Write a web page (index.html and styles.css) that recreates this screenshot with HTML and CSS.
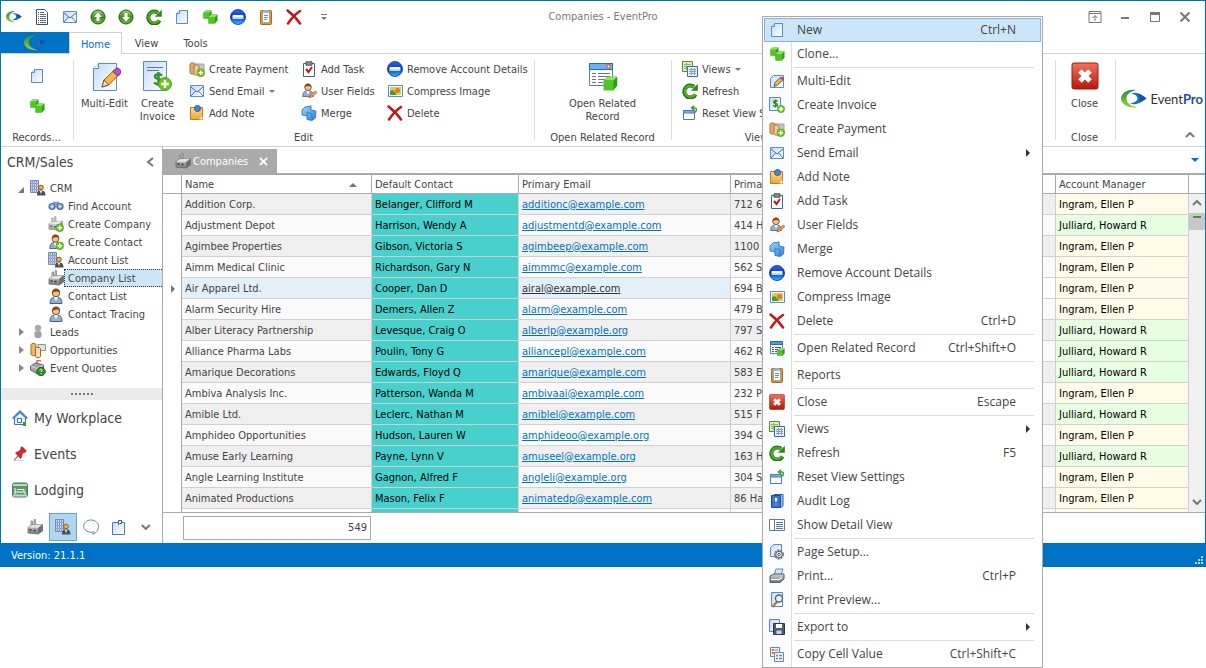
FILE: index.html
```html
<!DOCTYPE html>
<html lang="en">
<head>
  <meta charset="UTF-8" />
  <meta name="viewport" content="width=device-width, initial-scale=1.0"/>
  <title>Companies - EventPro</title>
  <link rel="stylesheet" href="styles.css">
</head>
<body>

  <!-- Icon sprite -->
  <svg class="sprite" aria-hidden="true">
    <defs>
      <linearGradient id="gPaper" x1="0" y1="0" x2="1" y2="1"><stop offset="0" stop-color="#c4dbf5"/><stop offset="1" stop-color="#fff"/></linearGradient>
      <linearGradient id="gGreen" x1="0" y1="0" x2="0" y2="1"><stop offset="0" stop-color="#a5d88a"/><stop offset=".5" stop-color="#3f8a1f"/><stop offset="1" stop-color="#6cc03c"/></linearGradient>
      <linearGradient id="gBlue" x1="0" y1="0" x2="0" y2="1"><stop offset="0" stop-color="#2f6df0"/><stop offset=".5" stop-color="#0b2fd0"/><stop offset="1" stop-color="#35c3ff"/></linearGradient>
      <linearGradient id="gRed" x1="0" y1="0" x2="0" y2="1"><stop offset="0" stop-color="#f0735c"/><stop offset="1" stop-color="#b81708"/></linearGradient>
      <linearGradient id="gGold" x1="0" y1="0" x2="0" y2="1"><stop offset="0" stop-color="#ffd98a"/><stop offset="1" stop-color="#f2a73a"/></linearGradient>
      <linearGradient id="gGrey" x1="0" y1="0" x2="0" y2="1"><stop offset="0" stop-color="#d4d4d4"/><stop offset="1" stop-color="#777"/></linearGradient>
      <linearGradient id="gSwirl" x1="0" y1="0" x2="0" y2="1"><stop offset="0" stop-color="#1f8f46"/><stop offset="1" stop-color="#a5cf3a"/></linearGradient>
      <linearGradient id="gSky" x1="0" y1="0" x2="1" y2="1"><stop offset="0" stop-color="#9ad4fa"/><stop offset="1" stop-color="#2e86d8"/></linearGradient>
    </defs>

    <symbol id="swirl" viewBox="0 0 26 20"><path d="M15 1C7-.5 0 4 0 9.500 0 15 7 19.500 17 18.500 10 17.500 5.500 14 5.500 9.500 5.500 5.500 9 2.500 15 1z" fill="url(#gSwirl)"/><path d="M10 4.500C16 2.500 21 5.500 25.500 9.500 21 13.500 15 16.500 9 14.500c4-.5 7.500-2.500 7.500-5s-2.500-4.500-6.500-5z" fill="#1173bd"/><path d="M17 5c3 .8 6 2.500 8.500 4.500L19 12c.5-2.500 0-5-2-7z" fill="#1b4f9c"/></symbol>
    <symbol id="plus" viewBox="0 0 8 8"><circle cx="4" cy="4" r="3.700" fill="#6cc522" stroke="#4b9a12" stroke-width=".5"/><path d="M4 1.800v4.400M1.800 4h4.400" stroke="#fff" stroke-width="1.400"/></symbol>
    <symbol id="cube" viewBox="0 0 10 10"><path d="M0.500 3 3 .5h6.500v6L7 9.500H.5z" fill="#2f9a14"/><path d="M.5 3 3 .5h6.500L7 3z" fill="#8be55c"/><path d="M.5 3H7v6.500H.5z" fill="#4fc528"/></symbol>

    <symbol id="doclist" viewBox="0 0 16 16"><path d="M2.500.5h8l3 3v12h-11z" fill="#fff" stroke="#2d5878"/><path d="M6 3.500h4M6 5.500h6M6 7.500h6M6 9.500h6M6 11.500h6M6 13.500h6" stroke="#4c6c94"/><path d="M4 3.500h1M4 5.500h1M4 7.500h1M4 9.500h1M4 11.500h1M4 13.500h1" stroke="#d33"/></symbol>
    <symbol id="mail" viewBox="0 0 16 16"><path d="M1.500 2.500h13v11h-13z" fill="url(#gPaper)" stroke="#5d8fd0"/><path d="M2 4l6 5 6-5M2 13l4.500-5M14 13 9.500 8" fill="none" stroke="#3b6fb8"/></symbol>
    <symbol id="up" viewBox="0 0 16 16"><circle cx="8" cy="8" r="7" fill="url(#gGreen)" stroke="#1f5a0c"/><path d="M8 3.500 12 8H9.500v4h-3V8H4z" fill="#fff"/></symbol>
    <symbol id="down" viewBox="0 0 16 16"><circle cx="8" cy="8" r="7" fill="url(#gGreen)" stroke="#1f5a0c"/><path d="M8 12.500 4 8h2.500V4h3v4H12z" fill="#fff"/></symbol>
    <symbol id="refresh" viewBox="0 0 16 16"><path d="M13.500 11.500A6 6 0 1 1 12 3.800" fill="none" stroke="#1f6b0c" stroke-width="4"/><path d="M13.200 11.300A5.700 5.700 0 1 1 12 4" fill="none" stroke="#4cab2e" stroke-width="2.400"/><path d="M15.800.8v7H8.800z" fill="#2a8a16"/></symbol>
    <symbol id="new" viewBox="0 0 16 16"><path d="M5.500 1.500h8v13h-11v-10z" fill="url(#gPaper)" stroke="#5b8ac6"/><path d="M5.500 1.500v3h-3" fill="#eef6ff" stroke="#5b8ac6"/></symbol>
    <symbol id="clone" viewBox="0 0 16 16"><use href="#cube" x="1" y="1" width="9" height="9"/><use href="#cube" x="6" y="5" width="10" height="10"/></symbol>
    <symbol id="remove" viewBox="0 0 16 16"><circle cx="8" cy="8" r="7.500" fill="url(#gBlue)" stroke="#0b2aa8" stroke-width=".8"/><rect x="2.500" y="6" width="11" height="4" rx="1" fill="#fff"/><path d="M3 8h10v2H3z" fill="#b9dcff"/></symbol>
    <symbol id="report" viewBox="0 0 16 16"><rect x="2.500" y="1.500" width="11" height="14" rx="1" fill="#dc9a2a" stroke="#a8690f"/><path d="M4.500 3.500h7v10h-7z" fill="#fff" stroke="#8fa6c4"/><rect x="5" y="1" width="6" height="3" rx="1" fill="#9db0c8"/><path d="M6 6.500h4M6 8.500h4M6 10.500h3" stroke="#5b8fd2"/></symbol>
    <symbol id="delete" viewBox="0 0 16 16"><path d="M1.500 1.500C6 5 11 10 14 14.500M14 2C9.500 5 5 10 2 14.500" fill="none" stroke="#c4161a" stroke-width="2.500" stroke-linecap="round"/></symbol>
    <symbol id="multiedit" viewBox="0 0 32 32"><path d="M9.500 2.500h18v27h-23v-22z" fill="url(#gPaper)" stroke="#5b8ac6"/><path d="M9.500 2.500v5h-5" fill="#fff" stroke="#5b8ac6"/><path d="M13 26l2-7L26 8.500l4.500 4.500L19.500 24z" fill="#f6b93c" stroke="#8a5a18"/><path d="M13 26l2-7 4.500 5z" fill="#f4e2c0" stroke="#444" stroke-width=".8"/><path d="M24 10.500l4.500 4.500 3-2.500c1.500-3-2-6.500-4.500-5z" fill="#b74fd0" stroke="#6f2c80"/></symbol>
    <symbol id="medit16" viewBox="0 0 16 16"><path d="M4.500 2.500h10v12h-13v-9z" fill="url(#gPaper)" stroke="#5b8ac6"/><path d="M5 13.500l1-4 6-5.500 2.500 2.500L8.500 12z" fill="#f6b93c" stroke="#3f3f3f" stroke-width=".8"/><path d="M11 5l2.500 2.500 1.500-2-1.800-2z" fill="#9a4fc0"/></symbol>
    <symbol id="invoice" viewBox="0 0 32 32"><path d="M1.500.5h23v29h-23z" fill="url(#gPaper)" stroke="#5b8ac6"/><path d="M5 6.500h16M5 9.500h12" stroke="#5b7898"/><path d="M20 14.500c-2-2-7-1.500-7 1.300s7 1.700 7 4.700-5.500 3.500-8 1.200M16.500 11v14" fill="none" stroke="#3a8f2c" stroke-width="2.500"/><use href="#plus" x="16" y="16" width="14" height="14"/></symbol>
    <symbol id="invoice16" viewBox="0 0 16 16"><path d="M.5.5h11v13H.5z" fill="url(#gPaper)" stroke="#5b8ac6"/><path d="M8.500 4.500c-1-1.300-4-1-4 .6s4 1 4 2.700-3 2-4.500.7M6.500 2.500v8" fill="none" stroke="#2e8b22" stroke-width="1.500"/><use href="#plus" x="8" y="8" width="8" height="8"/></symbol>
    <symbol id="payment" viewBox="0 0 16 16"><path d="M6 3h9v9H6z" fill="#c9c6bd" stroke="#a8a598"/><path d="M1 3c0-1.500 5-1.500 5 0v9c0 1.500-5 1.500-5 0z" fill="#dba872" stroke="#b07a42"/><path d="M5 5c0-1.500 5-1.500 5 0v8c0 1.500-5 1.500-5 0z" fill="#efcb98" stroke="#b07a42"/><use href="#plus" x="7.500" y="7.500" width="8.500" height="8.500"/></symbol>
    <symbol id="note" viewBox="0 0 16 16"><path d="M1.500 2.500h12v12h-12z" fill="url(#gGold)" stroke="#b97a20"/><path d="M13.500 11v3.500H10z" fill="#fff0c8"/><circle cx="8.500" cy="3.500" r="3" fill="#4b86cc" stroke="#2b5a98"/></symbol>
    <symbol id="task" viewBox="0 0 16 16"><path d="M2.500 2.500h11v13h-11z" fill="#fff" stroke="#34679e"/><path d="M5 .8h6v3.400H5z" fill="#8a8f96" stroke="#555"/><path d="M5 8l2.500 3 3.500-5" fill="none" stroke="#c4161a" stroke-width="2"/></symbol>
    <symbol id="person" viewBox="0 0 16 16"><path d="M2 15.500c0-5 2-6.500 6-6.500s6 1.500 6 6.500z" fill="#8fb0d8" stroke="#4d5f78"/><path d="M6 9h4l-2 4z" fill="#fff"/><circle cx="8" cy="5" r="3.700" fill="#f2c08a" stroke="#8a4d26"/><path d="M4 5c0-6 8-6 8 0-2-2-5-2-8 0z" fill="#8a4517"/></symbol>
    <symbol id="userfields" viewBox="0 0 16 16"><use href="#person" x="0" y="0" width="14" height="14"/><path d="M8 15l1-3 5.500-4 1.300 1.700L10.500 14z" fill="#f0a050" stroke="#b04a20" stroke-width=".7"/></symbol>
    <symbol id="merge" viewBox="0 0 16 16"><path d="M1 5l3-3 6-1v4l5 1-.5 7-3.500 2.500-5-1V11l-5-1z" fill="url(#gSky)" stroke="#2669b4" stroke-width=".8"/><path d="M6 11V7.500l5 1.200v6" fill="none" stroke="#2669b4" stroke-width=".7"/></symbol>
    <symbol id="compress" viewBox="0 0 16 16"><path d="M1.500 2.500h14v11h-14z" fill="#fff" stroke="#5b8ac6"/><path d="M3 4h11v8H3z" fill="#e0c95a"/><path d="M3 12V8l3-1 4 5z" fill="#4b9a2c"/><circle cx="10.500" cy="7.500" r="2.600" fill="#d9822a"/></symbol>
    <symbol id="open" viewBox="0 0 32 32"><path d="M2.500 2.500h23v22h-23z" fill="#fff" stroke="#4a86c6"/><path d="M2.500 2.500h23v6h-23z" fill="#6fb0f0" stroke="#2a6ab0"/><rect x="20" y="4" width="3" height="3" fill="#fff" stroke="#e04a2a"/><path d="M5 12.500h4M5 15.500h4M5 18.500h4M5 21.500h4M11 12.500h12M11 15.500h12M11 18.500h8M11 21.500h5" stroke="#777"/><use href="#cube" x="16" y="15" width="15" height="15"/></symbol>
    <symbol id="open16" viewBox="0 0 16 16"><path d="M1.500 1.500h12v12h-12z" fill="#fff" stroke="#4a86c6"/><path d="M1.500 1.500h12v3h-12z" fill="#4f9ae6" stroke="#2a6ab0"/><path d="M3 7.500h2M3 9.500h2M3 11.500h2M6 7.500h6M6 9.500h3M6 11.500h2" stroke="#555"/><use href="#cube" x="8" y="8" width="8" height="8"/></symbol>
    <symbol id="close" viewBox="0 0 28 28"><rect x="1" y="1" width="26" height="26" rx="2" fill="url(#gRed)" stroke="#9a1c10"/><path d="M9 9l10 10M19 9 9 19" stroke="#fff" stroke-width="5"/></symbol>
    <symbol id="views" viewBox="0 0 16 16"><path d="M.5.5h10v10H.5z" fill="#dcefc4" stroke="#5c8a34"/><path d="M2 3.500h7M2 5.500h4M2 7.500h3M4.500 2v7" stroke="#8db464"/><path d="M5.500 5.500h10v10h-10z" fill="#e8f1ff" stroke="#3d68ac"/><path d="M7 8.500h7M7 10.500h7M7 12.500h7M9.500 7v7M12.500 7v7" stroke="#7ba0dc"/></symbol>
    <symbol id="reset" viewBox="0 0 16 16"><path d="M1.500 5.500h11v9h-11z" fill="#fff" stroke="#4a7cba"/><path d="M1.500 5.500h11V8h-11z" fill="#78aaf0" stroke="#4a7cba"/><path d="M10 3h3c2 0 2 4-.5 4.500M12 .8 9.500 3 12 5" fill="none" stroke="#3f9a3a" stroke-width="1.500"/></symbol>
    <symbol id="audit" viewBox="0 0 16 16"><path d="M5 1.500h9v11l-2 2z" fill="#9fc0ea" stroke="#2a5db0"/><path d="M2.500 2.500h9v12h-9z" fill="#3a74cc" stroke="#1d4a94"/><path d="M6 5.500h2l-1 3zM6.500 11h1" fill="#fff" stroke="#fff"/></symbol>
    <symbol id="detail" viewBox="0 0 16 16"><path d="M.5 2.500h15v11H.5z" fill="#fff" stroke="#777"/><path d="M5.500 2v12" stroke="#777"/><path d="M7 5.500h7M7 7.500h7M7 9.500h7M7 11.500h7" stroke="#3f82c4"/></symbol>
    <symbol id="setup" viewBox="0 0 16 16"><path d="M4.500.5h8v12h-11v-9z" fill="url(#gPaper)" stroke="#5b8ac6"/><circle cx="10" cy="10.500" r="4.300" fill="none" stroke="#6c7482" stroke-width="1.500" stroke-dasharray="2 1"/><circle cx="10" cy="10.500" r="3.300" fill="#e8e8e8" stroke="#545c6a"/><circle cx="10" cy="10.500" r="1.200" fill="#fff" stroke="#545c6a"/></symbol>
    <symbol id="print" viewBox="0 0 16 16"><path d="M5 7l2-6h7l-2 6z" fill="#cfe4fb" stroke="#5b8ac6"/><path d="M1 8l4-2h10v5l-4 3.500H1z" fill="url(#gGrey)" stroke="#5c5c5c"/><path d="M2 11.500h8l3-2" fill="none" stroke="#fff"/></symbol>
    <symbol id="preview" viewBox="0 0 16 16"><path d="M2.500.5h11v14h-11z" fill="url(#gPaper)" stroke="#5b8ac6"/><path d="M8 9.500 3.500 15" stroke="#b87830" stroke-width="2.400"/><circle cx="10" cy="6.500" r="3.500" fill="#e3f2ff" stroke="#4c5f78" stroke-width="1.300"/></symbol>
    <symbol id="export" viewBox="0 0 16 16"><path d="M.5.5h10v12H.5z" fill="url(#gPaper)" stroke="#6b7cb8"/><path d="M4.500 4.500h11v11h-11z" fill="#4c5b78" stroke="#2b3650"/><path d="M7 5h6v4H7z" fill="#fff"/><path d="M7.500 11.500h5V15h-5z" fill="#c9d3e4"/></symbol>
    <symbol id="copy" viewBox="0 0 16 16"><path d="M1.500 1.500h9v9h-9z" fill="#eef4fb" stroke="#6a86a8"/><path d="M3 3.500h2v1H3zM3 6.500h2v1H3z" fill="#f07a20" stroke="#f07a20"/><path d="M6 4h3M6 7h3" stroke="#6a86a8"/><path d="M5.500 6.500h9v9h-9z" fill="#eef4fb" stroke="#6a86a8"/><path d="M7 9.500h2" stroke="#f07a20" stroke-width="2"/><path d="M10 9.500h3M7 12.500h2M10 12.500h3" stroke="#6a86a8" stroke-width="1.500"/></symbol>
    <symbol id="factory" viewBox="0 0 16 16"><path d="M4 7V2h1.500v4M7 6V.5h1.500V6" fill="#bbb" stroke="#888" stroke-width=".8"/><path d="M1 8.500 5 6l10.500-.5V12L11 15 1 14z" fill="url(#gGrey)" stroke="#666" stroke-width=".8"/><path d="M1 8.500 5 6l10.500-.5L11 9z" fill="#e2e2e2"/><path d="M11 9l4.500-3.500V12L11 15z" fill="#707070"/><path d="M2.500 11h2M6.500 11.500h2" stroke="#333" stroke-width="1.500"/></symbol>
    <symbol id="factoryadd" viewBox="0 0 16 16"><g opacity=".75"><use href="#factory" width="15" height="15"/></g><use href="#plus" x="7.500" y="7.500" width="8.500" height="8.500"/></symbol>
    <symbol id="contactadd" viewBox="0 0 16 16"><use href="#person" width="15" height="15"/><use href="#plus" x="7.500" y="7.500" width="8.500" height="8.500"/></symbol>
    <symbol id="crm" viewBox="0 0 16 16"><path d="M.5.500h8v12h-8z" fill="#c0d0ec" stroke="#7a8ab0"/><path d="M2.500 1v11M4.500 1v11M6.500 1v11M1 3.500h7M1 6.500h7M1 9.500h7" stroke="#8fa2cc"/><path d="M7 15.500c0-4 1-5 4-5s4.500 1 4.500 5z" fill="#4c5056"/><path d="M10 11h2l-1 3z" fill="#fff"/><circle cx="11" cy="7.500" r="2.300" fill="#f1b44c" stroke="#8a5a18"/></symbol>
    <symbol id="binoc" viewBox="0 0 16 16"><circle cx="4" cy="8.500" r="3" fill="#7fa6d6" stroke="#456a9e" stroke-width="1.200"/><circle cx="12" cy="8.500" r="3" fill="#7fa6d6" stroke="#456a9e" stroke-width="1.200"/><path d="M5 4.500h2v4h2v-4h2" fill="none" stroke="#6488bc" stroke-width="1.600"/><circle cx="4" cy="8.500" r="1.200" fill="#dbe8f8"/><circle cx="12" cy="8.500" r="1.200" fill="#dbe8f8"/></symbol>
    <symbol id="lead" viewBox="0 0 16 16"><circle cx="8" cy="4" r="3.200" fill="#aaa"/><path d="M4.500 8c2-1.500 5-1.500 7 0v4c-.5 3-6.500 3-7 0z" fill="#a2a2a2"/></symbol>
    <symbol id="opp" viewBox="0 0 16 16"><path d="M8 2.500h7.500v6H8z" fill="#dfe4ea" stroke="#8a929c"/><path d="M1 2.500c0-1.500 5-1.500 5 0v10c0 1.500-5 1.500-5 0z" fill="#eeb468" stroke="#a86826"/><path d="M5.500 6.500c0-1.500 5-1.500 5 0v8c0 1.500-5 1.500-5 0z" fill="#fbdca6" stroke="#a86826"/></symbol>
    <symbol id="quote" viewBox="0 0 16 16"><path d="M.5 6l5-3 8 2v5l-6 4-7-4z" fill="#a8a8a8" stroke="#666"/><path d="M1 6l6 2.500L13 5" fill="none" stroke="#ddd"/><path d="M7 0v4M7 .8h4" stroke="#c33"/><circle cx="11" cy="11.500" r="4.200" fill="#2f8f24" stroke="#1c6414"/><path d="M9.800 10.500c0-2 2.600-1.500 2.300 0L11 12M11 13.200v1" fill="none" stroke="#fff"/></symbol>
    <symbol id="house" viewBox="0 0 16 16"><path d="M2.500 7.500v7h11v-7L8 2.500z" fill="#e4effc" stroke="#4672b4"/><path d="M.8 8.500 8 1.500l7.200 7" fill="none" stroke="#4d80c8" stroke-width="2"/><path d="M5.500 8.500h4v4h-4z" fill="#fff" stroke="#3f6cb0"/><path d="M11 12h3v4h-3z" fill="#3f9a2a"/></symbol>
    <symbol id="pin" viewBox="0 0 16 16"><path d="M2 14.500 6 10" stroke="#8a8a8a" stroke-width="1.300"/><path d="M3 14.500h9" stroke="#ddd"/><path d="M3.500 7c1.500-1.500 3-1.500 3.500-1.500L9 3c-.5-1.500.5-2.500 1.500-2l3.500 3.500c.5 1-.5 2-2 1.800L10 8.500c0 1 0 2.500-1.500 4z" fill="#d8262a" stroke="#8e1014" stroke-width=".6"/></symbol>
    <symbol id="lodging" viewBox="0 0 16 16"><rect x=".5" y="1" width="15" height="14" rx="2" fill="#5a9a6a" stroke="#4c7a5a"/><path d="M1 3h14M1 13.500h14" stroke="#bcd8c0" stroke-width="2"/><path d="M3 6v6M3 10h10v2M5 7.500h7v2" fill="none" stroke="#fff"/></symbol>
    <symbol id="bubble" viewBox="0 0 16 16"><path d="M8 1C4 1 .6 3.800.6 7.200c0 3.300 3.400 6 7.400 6 1 0 2-.2 3-.5 0 1-.5 1.800-1.500 2.500 3-.4 6-3.800 6-8C15.500 3.800 12 1 8 1z" fill="#fcfdff" stroke="#6d86a6"/></symbol>
    <symbol id="workplan" viewBox="0 0 16 16"><path d="M2.500 3.500h12v12h-12z" fill="url(#gPaper)" stroke="#4a7cba"/><path d="M8.500 6V1.500h3v3h-2" fill="#fff" stroke="#2a5a98"/></symbol>
    <symbol id="chevron" viewBox="0 0 10 6"><path d="M1 5l4-4 4 4" fill="none" stroke="#777" stroke-width="2"/></symbol>
  </svg>

  <div class="window">
    <header class="titlebar">
      <div class="quick">
        <button aria-label="EventPro"><svg><use href="#swirl"/></svg></button>
        <button aria-label="List"><svg><use href="#doclist"/></svg></button>
        <button aria-label="Mail"><svg><use href="#mail"/></svg></button>
        <button aria-label="Previous"><svg><use href="#up"/></svg></button>
        <button aria-label="Next"><svg><use href="#down"/></svg></button>
        <button aria-label="Refresh"><svg><use href="#refresh"/></svg></button>
        <button aria-label="New"><svg><use href="#new"/></svg></button>
        <button aria-label="Clone"><svg><use href="#clone"/></svg></button>
        <button aria-label="Remove"><svg><use href="#remove"/></svg></button>
        <button aria-label="Reports"><svg><use href="#report"/></svg></button>
        <button aria-label="Delete"><svg><use href="#delete"/></svg></button>
        <button class="more" aria-label="Customize"><svg viewBox="0 0 16 16"><path d="M5 5.500h6" stroke="#777"/><path d="M5 8h6l-3 3z" fill="#777"/></svg></button>
      </div>
      <h1>Companies - EventPro</h1>
      <div class="winctl">
        <button aria-label="Ribbon options"><svg viewBox="0 0 14 14"><path d="M1 1.500h12v11H1zM1 3.500h12M7 11V6M4.500 8 7 5.500 9.500 8" fill="none" stroke="#777"/></svg></button>
        <button aria-label="Minimize"><svg viewBox="0 0 14 14"><path d="M3 8h8" stroke="#777" stroke-width="2"/></svg></button>
        <button aria-label="Maximize"><svg viewBox="0 0 14 14"><path d="M2.500 3v8.500h9V3" fill="none" stroke="#777"/><path d="M2 3.500h10" stroke="#777" stroke-width="3"/></svg></button>
        <button aria-label="Close window"><svg viewBox="0 0 14 14"><path d="M2.500 2.500l9 9M11.500 2.500l-9 9" stroke="#777" stroke-width="2"/></svg></button>
      </div>
    </header>

    <nav class="tabs">
      <button class="file" aria-label="Application menu"><svg><use href="#swirl"/></svg></button>
      <button class="tab active">Home</button>
      <button class="tab">View</button>
      <button class="tab">Tools</button>
    </nav>

    <div class="ribbon">
      <section class="group records">
        <div class="stack">
          <button aria-label="New record"><svg><use href="#new"/></svg></button>
          <button aria-label="Clone record"><svg><use href="#clone"/></svg></button>
        </div>
        <h2>Records...</h2>
      </section>
      <section class="group edit">
        <div class="tools">
          <button class="big"><svg><use href="#multiedit"/></svg>Multi-Edit</button>
          <button class="big"><svg><use href="#invoice"/></svg>Create Invoice</button>
          <div class="small-grid">
            <button class="small"><svg><use href="#payment"/></svg>Create Payment</button>
            <button class="small"><svg><use href="#task"/></svg>Add Task</button>
            <button class="small"><svg><use href="#remove"/></svg>Remove Account Details</button>
            <button class="small"><svg><use href="#mail"/></svg>Send Email<i class="caret"></i></button>
            <button class="small"><svg><use href="#userfields"/></svg>User Fields</button>
            <button class="small"><svg><use href="#compress"/></svg>Compress Image</button>
            <button class="small"><svg><use href="#note"/></svg>Add Note</button>
            <button class="small"><svg><use href="#merge"/></svg>Merge</button>
            <button class="small"><svg><use href="#delete"/></svg>Delete</button>
          </div>
        </div>
        <h2>Edit</h2>
      </section>
      <section class="group related">
        <div class="tools">
          <button class="big"><svg><use href="#open"/></svg>Open Related Record</button>
        </div>
        <h2>Open Related Record</h2>
      </section>
      <section class="group view">
        <div class="tools">
          <div class="small-grid">
            <button class="small"><svg><use href="#views"/></svg>Views<i class="caret"></i></button>
            <button class="small"><svg><use href="#refresh"/></svg>Refresh</button>
            <button class="small"><svg><use href="#reset"/></svg>Reset View S</button>
          </div>
        </div>
        <h2>View</h2>
      </section>
      <section class="group closing">
        <div class="tools">
          <button class="big"><svg><use href="#close"/></svg>Close</button>
        </div>
        <h2>Close</h2>
      </section>
      <div class="brand">
        <div class="logo"><svg><use href="#swirl"/></svg><span>Event<b>Pro</b></span></div>
        <button aria-label="Collapse ribbon"><svg><use href="#chevron"/></svg></button>
      </div>
    </div>

    <div class="main">
      <aside class="sidebar">
        <div class="side-head">CRM/Sales <button aria-label="Collapse"><svg viewBox="0 0 8 10"><path d="M7 1 2 5l5 4" fill="none" stroke="#777" stroke-width="2"/></svg></button></div>
        <ul class="tree">
          <li><a href="#"><i class="exp open"></i><svg><use href="#crm"/></svg><span>CRM</span></a></li>
          <li class="sub"><a href="#"><svg><use href="#binoc"/></svg><span>Find Account</span></a></li>
          <li class="sub"><a href="#"><svg><use href="#factoryadd"/></svg><span>Create Company</span></a></li>
          <li class="sub"><a href="#"><svg><use href="#contactadd"/></svg><span>Create Contact</span></a></li>
          <li class="sub"><a href="#"><svg><use href="#crm"/></svg><span>Account List</span></a></li>
          <li class="sub selected"><a href="#"><svg><use href="#factory"/></svg><span>Company List</span></a></li>
          <li class="sub"><a href="#"><svg><use href="#person"/></svg><span>Contact List</span></a></li>
          <li class="sub"><a href="#"><svg><use href="#person"/></svg><span>Contact Tracing</span></a></li>
          <li><a href="#"><i class="exp"></i><svg><use href="#lead"/></svg><span>Leads</span></a></li>
          <li><a href="#"><i class="exp"></i><svg><use href="#opp"/></svg><span>Opportunities</span></a></li>
          <li><a href="#"><i class="exp"></i><svg><use href="#quote"/></svg><span>Event Quotes</span></a></li>
        </ul>
        <div class="splitter"><svg viewBox="0 0 24 2"><path d="M1 1h22" stroke="#777" stroke-width="2" stroke-dasharray="2 2"/></svg></div>
        <ul class="areas">
          <li><a href="#"><svg><use href="#house"/></svg>My Workplace</a></li>
          <li><a href="#"><svg><use href="#pin"/></svg>Events</a></li>
          <li><a href="#"><svg><use href="#lodging"/></svg>Lodging</a></li>
        </ul>
        <div class="side-icons">
          <button aria-label="Companies"><svg><use href="#factory"/></svg></button>
          <button class="on" aria-label="CRM"><svg><use href="#crm"/></svg></button>
          <button aria-label="Messages"><svg><use href="#bubble"/></svg></button>
          <button aria-label="Notes"><svg><use href="#workplan"/></svg></button>
          <button class="flip" aria-label="More"><svg><use href="#chevron"/></svg></button>
        </div>
      </aside>

      <div class="content">
        <div class="doc-tabs">
          <div class="doc-tab"><svg><use href="#factory"/></svg>Companies <button aria-label="Close tab"><svg viewBox="0 0 10 10"><path d="M1 1l8 8M9 1 1 9" stroke="#fff" stroke-width="2"/></svg></button></div>
          <button class="doc-list" aria-label="Open documents"><i></i></button>
        </div>
        <div class="grid">
          <table>
            <colgroup><col class="c-mark"><col class="c-name"><col class="c-contact"><col class="c-email"><col><col class="c-manager"></colgroup>
            <thead>
              <tr><th></th><th class="sorted">Name</th><th>Default Contact</th><th>Primary Email</th><th>Primar</th><th>Account Manager</th></tr>
            </thead>
            <tbody id="companyRows"></tbody>
          </table>
          <div class="scrollbar">
            <div class="corner"></div>
            <div class="track">
              <svg class="arrow"><use href="#chevron"/></svg>
              <div class="thumb"></div>
              <svg class="arrow flip"><use href="#chevron"/></svg>
            </div>
          </div>
        </div>
        <div class="summary"><output>549</output></div>
      </div>
    </div>

    <footer class="status">Version: 21.1.1
      <svg viewBox="0 0 8 8"><path d="M6 0h2v2H6zM3 3h2v2H3zM6 3h2v2H6zM0 6h2v2H0zM3 6h2v2H3zM6 6h2v2H6z" fill="#bcd6ee"/></svg>
    </footer>
  </div>

  <!-- Context menu -->
  <div class="menu" role="menu">
    <button class="hover"><svg><use href="#new"/></svg><span>New</span><kbd>Ctrl+N</kbd></button>
    <button><svg><use href="#clone"/></svg><span>Clone...</span></button>
    <hr>
    <button><svg><use href="#medit16"/></svg><span>Multi-Edit</span></button>
    <button><svg><use href="#invoice16"/></svg><span>Create Invoice</span></button>
    <button><svg><use href="#payment"/></svg><span>Create Payment</span></button>
    <button class="more"><svg><use href="#mail"/></svg><span>Send Email</span></button>
    <button><svg><use href="#note"/></svg><span>Add Note</span></button>
    <button><svg><use href="#task"/></svg><span>Add Task</span></button>
    <button><svg><use href="#userfields"/></svg><span>User Fields</span></button>
    <button><svg><use href="#merge"/></svg><span>Merge</span></button>
    <button><svg><use href="#remove"/></svg><span>Remove Account Details</span></button>
    <button><svg><use href="#compress"/></svg><span>Compress Image</span></button>
    <button><svg><use href="#delete"/></svg><span>Delete</span><kbd>Ctrl+D</kbd></button>
    <hr>
    <button><svg><use href="#open16"/></svg><span>Open Related Record</span><kbd>Ctrl+Shift+O</kbd></button>
    <hr>
    <button><svg><use href="#report"/></svg><span>Reports</span></button>
    <hr>
    <button><svg><use href="#close"/></svg><span>Close</span><kbd>Escape</kbd></button>
    <hr>
    <button class="more"><svg><use href="#views"/></svg><span>Views</span></button>
    <button><svg><use href="#refresh"/></svg><span>Refresh</span><kbd>F5</kbd></button>
    <button><svg><use href="#reset"/></svg><span>Reset View Settings</span></button>
    <button><svg><use href="#audit"/></svg><span>Audit Log</span></button>
    <button><svg><use href="#detail"/></svg><span>Show Detail View</span></button>
    <hr>
    <button><svg><use href="#setup"/></svg><span>Page Setup...</span></button>
    <button><svg><use href="#print"/></svg><span>Print...</span><kbd>Ctrl+P</kbd></button>
    <button><svg><use href="#preview"/></svg><span>Print Preview...</span></button>
    <hr>
    <button class="more"><svg><use href="#export"/></svg><span>Export to</span></button>
    <hr>
    <button><svg><use href="#copy"/></svg><span>Copy Cell Value</span><kbd>Ctrl+Shift+C</kbd></button>
  </div>

  <script src="script.js"></script>
</body>
</html>
```
FILE: styles.css
```css
* {
  box-sizing: border-box;
}

body {
  margin: 0;
  position: relative;
  min-height: 100vh;
  background: #fff;
  color: #444;
  font-family: "DejaVu Sans Condensed", "DejaVu Sans", sans-serif;
  font-size: 11px;
  line-height: 13px;
}

button {
  padding: 0;
  border: none;
  background: none;
  font: inherit;
  color: inherit;
  cursor: pointer;
}

svg {
  display: block;
  width: 16px;
  height: 16px;
  flex: none;
}

ul {
  margin: 0;
  padding: 0;
  list-style: none;
}

a {
  color: inherit;
  text-decoration: none;
}

h1, h2 {
  margin: 0;
  font-size: 11px;
  font-weight: normal;
}

.sprite {
  position: absolute;
  width: 0;
  height: 0;
}

.window {
  border: 1px solid #0072c6;
  border-bottom: none;
}

/* title bar */
.titlebar {
  display: grid;
  grid-template-columns: 1fr auto 1fr;
  align-items: center;
  height: 31px;
  color: #777;
}

.quick {
  display: flex;
  gap: 12px;
  padding-left: 5px;
}

.quick .more {
  margin-left: 2px;
}

.winctl {
  display: flex;
  justify-content: flex-end;
  gap: 16px;
  padding-right: 13px;
}

.winctl svg {
  width: 14px;
  height: 14px;
}

/* ribbon tabs */
.tabs {
  display: flex;
  height: 22px;
  border-bottom: 1px solid #d0d0d0;
}

.tabs .file {
  display: flex;
  justify-content: center;
  align-items: center;
  width: 68px;
  background: #0072c6;
}

.tabs .file svg {
  width: 22px;
  height: 18px;
}

.tab {
  width: 49px;
  padding: 2px 0 0;
}

.tab.active {
  width: 53px;
  height: 22px;
  border: 1px solid #d0d0d0;
  border-bottom: none;
  background: #fff;
  color: #0072c6;
}

/* ribbon */
.ribbon {
  display: flex;
  height: 93px;
  border-bottom: 1px solid #d0d0d0;
}

.group {
  display: flex;
  flex-direction: column;
  justify-content: space-between;
  padding: 4px 0 2px;
  background: linear-gradient(#dcdcdc, #dcdcdc) right 6px / 1px 80px no-repeat;
}

.group h2 {
  text-align: center;
}

.tools {
  display: flex;
}

.records {
  width: 73px;
  padding-right: 2px;
}

.stack {
  display: flex;
  flex-direction: column;
  align-items: center;
  gap: 14px;
  padding-top: 10px;
}

.big {
  display: flex;
  flex-direction: column;
  align-items: center;
  gap: 4px;
  width: 53px;
  padding-top: 3px;
}

.big svg {
  width: 32px;
  height: 32px;
}

.small-grid {
  display: grid;
  grid-template-columns: 112px 86px auto;
  margin-left: 5px;
}

.small {
  display: flex;
  align-items: center;
  gap: 4px;
  height: 22px;
  white-space: nowrap;
}

.caret {
  border: 3px solid transparent;
  border-top-color: #777;
  border-bottom: none;
}

.edit {
  width: 461px;
  padding-left: 4px;
}

.edit h2 {
  padding-right: 6px;
}

.related {
  width: 137px;
  padding-right: 2px;
}

.related .tools,
.closing .tools {
  justify-content: center;
}

.related .big {
  width: 80px;
}

.view {
  width: 164px;
  padding-left: 5px;
}

.view .small-grid {
  grid-template-columns: auto;
}

.closing {
  width: 61px;
  margin-left: auto;
  padding-right: 2px;
  background: linear-gradient(#dcdcdc, #dcdcdc) right 6px / 1px 80px no-repeat, linear-gradient(#dcdcdc, #dcdcdc) left 6px / 1px 80px no-repeat;
}

.closing svg {
  width: 28px;
  height: 28px;
  margin: 1px 0 3px;
}

.brand {
  display: flex;
  flex-direction: column;
  justify-content: space-between;
  align-items: flex-end;
  width: 89px;
  padding: 35px 0 8px;
}

.brand button {
  margin-right: 10px;
}

.brand button svg,
.flip svg {
  width: 10px;
  height: 6px;
}

.logo {
  display: flex;
  align-items: center;
  gap: 3px;
  padding-right: 2px;
  color: #333;
  font-family: Lato, sans-serif;
  font-size: 13px;
}

.logo svg {
  width: 26px;
  height: 20px;
}

.logo b {
  color: #1b4f9c;
}

/* main area */
.main {
  display: flex;
}

.sidebar {
  width: 162px;
  flex: none;
  border-right: 1px solid #aaa;
}

.side-head {
  display: flex;
  justify-content: space-between;
  align-items: center;
  height: 32px;
  padding: 0 8px 2px 6px;
  font-size: 14px;
}

.side-head svg {
  width: 8px;
  height: 10px;
}

.tree {
  padding-bottom: 11px;
}

.tree a {
  display: flex;
  align-items: center;
  height: 18px;
  padding-left: 16px;
}

.tree span {
  flex: 1;
  height: 18px;
  padding: 2px 3px;
  border: 1px solid transparent;
  border-right: none;
  white-space: nowrap;
}

.tree .sub a {
  padding-left: 47px;
}

.tree .selected span {
  border: 1px dotted #333;
  border-right: none;
  background: #cde6f7;
}

.exp {
  margin: 0 6px 0 2px;
  border: 4px solid transparent;
  border-left: 5px solid #888;
  border-right: none;
}

.exp.open {
  margin: 4px 6px 0 1px;
  border: none;
  border-left: 6px solid transparent;
  border-bottom: 6px solid #777;
}

.splitter {
  display: flex;
  justify-content: center;
  align-items: center;
  height: 12px;
  background: #ebebeb;
}

.splitter svg {
  width: 24px;
  height: 2px;
}

.areas a {
  display: flex;
  align-items: center;
  gap: 6px;
  height: 36px;
  padding-left: 11px;
  font-size: 14px;
}

.side-icons {
  display: flex;
  height: 35px;
  padding: 5px 2px 2px 20px;
}

.side-icons button {
  display: flex;
  justify-content: center;
  align-items: center;
  width: 28px;
  height: 28px;
}

.side-icons .on {
  border: 1px solid #62a2e4;
  background: #b1d6f0;
}

.flip {
  transform: rotate(180deg);
}

.content {
  flex: 1;
  min-width: 0;
}

.doc-tabs {
  display: flex;
  justify-content: space-between;
  height: 28px;
  padding-top: 2px;
  border-bottom: 2px solid #aaa;
}

.doc-tab {
  display: flex;
  align-items: center;
  gap: 2px;
  padding: 0 9px 0 12px;
  background: #aaa;
  color: #fff;
}

.doc-tab button {
  margin-left: 9px;
}

.doc-tab button svg {
  width: 9px;
  height: 9px;
}

.doc-list {
  width: 20px;
  padding-bottom: 6px;
}

.doc-list i {
  display: inline-block;
  border: 4px solid transparent;
  border-top-color: #0072c6;
  border-bottom: none;
}

/* grid */
.grid {
  display: flex;
  border-bottom: 1px solid #aaa;
}

table {
  flex: 1;
  width: 0;
  table-layout: fixed;
  border-spacing: 0;
}

.c-mark { width: 19px; }
.c-name { width: 190px; }
.c-contact { width: 147px; }
.c-email { width: 212px; }
.c-manager { width: 133px; }

th, td {
  padding: 0 3px;
  border-right: 1px solid #d0d0d0;
  border-bottom: 1px solid #d0d0d0;
  text-align: left;
  font-weight: normal;
  white-space: nowrap;
  overflow: hidden;
}

th {
  height: 19px;
  border-color: #aaa;
}

td {
  height: 21px;
  background: #fafafa;
}

tr:nth-child(odd) td {
  background: #efefef;
}

tbody tr td:first-child {
  background: #fff;
  border-right-color: #aaa;
  border-bottom: none;
}

td:last-child, td:nth-child(3) {
  color: #000;
}

tbody tr td:nth-child(3) {
  background: #48d1cc;
}

tbody tr td.ingram {
  background: #fffbe6;
}

tbody tr td.julliard {
  background: #e6ffe0;
}

td a {
  color: #0072c6;
  text-decoration: underline;
}

tbody tr.focused td:nth-child(2),
tbody tr.focused td:nth-child(4) {
  background: #e3f0fa;
}

tbody tr.focused td:nth-child(5) {
  background: #fff;
}

.focused a {
  color: #333;
}

.pointer {
  display: block;
  width: 4px;
  margin-left: 5px;
  border: 4px solid transparent;
  border-left-color: #777;
  border-right: none;
}

.clipped td {
  height: 3px;
  border-bottom: none;
}

.sorted::after {
  content: "";
  float: right;
  margin: 5px 11px 0 0;
  border: 4px solid transparent;
  border-bottom-color: #777;
  border-top: none;
}

.scrollbar {
  display: flex;
  flex-direction: column;
  width: 16px;
}

.corner {
  height: 19px;
  border-bottom: 1px solid #aaa;
}

.track {
  display: flex;
  flex-direction: column;
  flex: 1;
  background: #f0f0f0;
}

.arrow {
  width: 10px;
  height: 6px;
  margin: 6px 3px 7px;
}

.arrow.flip {
  margin-top: auto;
}

.thumb {
  height: 17px;
  padding: 3px 4px;
  background: #c8c8c8;
}

.thumb::before {
  content: "";
  display: block;
  height: 2px;
  background: #3f9a2a;
}

.summary {
  height: 30px;
  padding: 3px 20px;
}

.summary output {
  display: block;
  width: 188px;
  height: 24px;
  padding: 0 3px;
  border: 1px solid #aaa;
  line-height: 22px;
  text-align: right;
}

.status {
  display: flex;
  justify-content: space-between;
  align-items: center;
  height: 24px;
  padding: 0 2px 0 10px;
  background: #0072c6;
  color: #fff;
}

.status svg {
  width: 8px;
  height: 8px;
  margin-top: 10px;
}

/* context menu */
.menu {
  position: absolute;
  top: 16px;
  left: 762px;
  width: 281px;
  padding: 1px;
  border: 1px solid #aaa;
  background: linear-gradient(90deg, #fafcfe 28px, #dcdcdc 28px, #dcdcdc 29px, #fff 29px);
  font-family: "Open Sans", sans-serif;
  font-size: 12px;
  line-height: 12px;
}

.menu button {
  display: flex;
  align-items: center;
  width: 100%;
  height: 24px;
  padding: 0 24px 0 4px;
  border: 1px solid transparent;
  text-align: left;
}

.menu button.hover {
  border-color: #7eb4ea;
  background: #cde6f7;
}

.menu span {
  flex: 1;
  margin-left: 12px;
}

.menu kbd {
  font: inherit;
}

.menu .more {
  padding-right: 10px;
}

.menu .more::after {
  content: "";
  border: 4px solid transparent;
  border-left-color: #333;
  border-right: none;
}

.menu hr {
  height: 1px;
  margin: 1px 7px 1px 30px;
  border: none;
  background: #dcdcdc;
}
```
FILE: script.js
```js
const companies = [
  ['Addition Corp.', 'Belanger, Clifford M', 'additionc@example.com', '712 6', 'I'],
  ['Adjustment Depot', 'Harrison, Wendy A', 'adjustmentd@example.com', '414 H', 'J'],
  ['Agimbee Properties', 'Gibson, Victoria S', 'agimbeep@example.com', '1100', 'I'],
  ['Aimm Medical Clinic', 'Richardson, Gary N', 'aimmmc@example.com', '562 S', 'I'],
  ['Air Apparel Ltd.', 'Cooper, Dan D', 'airal@example.com', '694 B', 'I'],
  ['Alarm Security Hire', 'Demers, Allen Z', 'alarm@example.com', '479 B', 'I'],
  ['Alber Literacy Partnership', 'Levesque, Craig O', 'alberlp@example.org', '797 S', 'J'],
  ['Alliance Pharma Labs', 'Poulin, Tony G', 'alliancepl@example.com', '462 R', 'J'],
  ['Amarique Decorations', 'Edwards, Floyd Q', 'amarique@example.com', '583 E', 'J'],
  ['Ambiva Analysis Inc.', 'Patterson, Wanda M', 'ambivaai@example.com', '232 P', 'I'],
  ['Amible Ltd.', 'Leclerc, Nathan M', 'amiblel@example.com', '515 F', 'J'],
  ['Amphideo Opportunities', 'Hudson, Lauren W', 'amphideoo@example.org', '394 G', 'I'],
  ['Amuse Early Learning', 'Payne, Lynn V', 'amuseel@example.org', '163 H', 'J'],
  ['Angle Learning Institute', 'Gagnon, Alfred F', 'angleli@example.org', '304 S', 'I'],
  ['Animated Productions', 'Mason, Felix F', 'animatedp@example.com', '86 Ha', 'I']
];

const managers = {
  I: ['ingram', 'Ingram, Ellen P'],
  J: ['julliard', 'Julliard, Howard R']
};

const tbody = document.getElementById('companyRows');

companies.forEach(([name, contact, email, address, key]) => {
  const [cls, manager] = managers[key];
  const focused = name === 'Air Apparel Ltd.';
  const row = document.createElement('tr');
  if (focused) row.className = 'focused';
  row.innerHTML = `<td>${focused ? '<i class="pointer"></i>' : ''}</td><td>${name}</td><td>${contact}</td>` +
    `<td><a href="mailto:${email}">${email}</a></td><td>${address}</td><td class="${cls}">${manager}</td>`;
  tbody.appendChild(row);
});

// top edge of the next row, cut off by the summary bar
const clipped = document.createElement('tr');
clipped.className = 'clipped';
clipped.innerHTML = '<td></td><td></td><td></td><td></td><td></td><td class="ingram"></td>';
tbody.appendChild(clipped);
```
